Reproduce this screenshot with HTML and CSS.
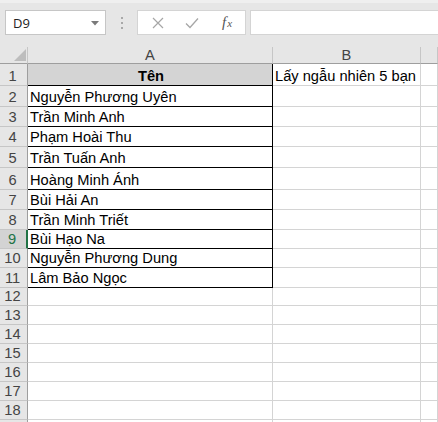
FILE: index.html
```html
<!DOCTYPE html>
<html lang="vi">
<head>
<meta charset="utf-8">
<title>Sheet</title>
<link rel="stylesheet" href="styles.css">
</head>
<body>
<div class="app">
  <div class="toolbar">
    <div class="namebox">
      <span class="nb-text">D9</span>
      <svg class="nb-arrow" width="8" height="5" viewBox="0 0 8 5"><path d="M0 0 H8 L4 4.5 Z" fill="#7a7a7a"/></svg>
    </div>
    <div class="grip"><span></span><span></span><span></span></div>
    <div class="fbuttons">
      <svg class="ic-x" width="12" height="12" viewBox="0 0 12 12"><path d="M1 1 L11 11 M11 1 L1 11" stroke="#a6a6a6" stroke-width="1.2" fill="none"/></svg>
      <svg class="ic-check" width="14" height="12" viewBox="0 0 14 12"><path d="M1 6.5 L5 10.5 L13 1.5" stroke="#a6a6a6" stroke-width="1.3" fill="none"/></svg>
      <span class="fx"><i>f</i><i class="fx-x">x</i></span>
    </div>
    <div class="finput"></div>
  </div>
  <div class="sheet">
    <div class="corner"><svg width="12" height="12" viewBox="0 0 12 12"><path d="M12 0 V12 H0 Z" fill="#bdbdbd"/></svg></div>
    <div class="colh">A</div>
    <div class="colh">B</div>
    <div class="colh"></div>

    <div class="rowh">1</div><div class="cell a head">Tên</div><div class="cell">Lấy ngẫu nhiên 5 bạn</div><div class="cell"></div>
    <div class="rowh">2</div><div class="cell a">Nguyễn Phương Uyên</div><div class="cell"></div><div class="cell"></div>
    <div class="rowh">3</div><div class="cell a">Trần Minh Anh</div><div class="cell"></div><div class="cell"></div>
    <div class="rowh">4</div><div class="cell a">Phạm Hoài Thu</div><div class="cell"></div><div class="cell"></div>
    <div class="rowh">5</div><div class="cell a">Trần Tuấn Anh</div><div class="cell"></div><div class="cell"></div>
    <div class="rowh">6</div><div class="cell a">Hoàng Minh Ánh</div><div class="cell"></div><div class="cell"></div>
    <div class="rowh">7</div><div class="cell a">Bùi Hải An</div><div class="cell"></div><div class="cell"></div>
    <div class="rowh">8</div><div class="cell a">Trần Minh Triết</div><div class="cell"></div><div class="cell"></div>
    <div class="rowh active">9</div><div class="cell a">Bùi Hạo Na</div><div class="cell"></div><div class="cell"></div>
    <div class="rowh">10</div><div class="cell a">Nguyễn Phương Dung</div><div class="cell"></div><div class="cell"></div>
    <div class="rowh">11</div><div class="cell a">Lâm Bảo Ngọc</div><div class="cell"></div><div class="cell"></div>
    <div class="rowh">12</div><div class="cell"></div><div class="cell"></div><div class="cell"></div>
    <div class="rowh">13</div><div class="cell"></div><div class="cell"></div><div class="cell"></div>
    <div class="rowh">14</div><div class="cell"></div><div class="cell"></div><div class="cell"></div>
    <div class="rowh">15</div><div class="cell"></div><div class="cell"></div><div class="cell"></div>
    <div class="rowh">16</div><div class="cell"></div><div class="cell"></div><div class="cell"></div>
    <div class="rowh">17</div><div class="cell"></div><div class="cell"></div><div class="cell"></div>
    <div class="rowh">18</div><div class="cell"></div><div class="cell"></div><div class="cell"></div>
    <div class="rowh"></div><div class="cell"></div><div class="cell"></div><div class="cell"></div>
  </div>
</div>
</body>
</html>
```

FILE: styles.css
```css
html, body {
  margin: 0;
  padding: 0;
  background: #ffffff;
}
.app {
  width: 438px;
  height: 422px;
  overflow: hidden;
  font-family: "Liberation Sans", Arial, sans-serif;
}
.toolbar {
  height: 47px;
  box-sizing: border-box;
  background: #e6e6e6;
  border-top: 3px solid #efefef;
  padding: 7px 0 0 5px;
  display: flex;
  align-items: flex-start;
}
.namebox {
  width: 101px;
  height: 25px;
  box-sizing: border-box;
  background: #ffffff;
  border: 1px solid #c6c6c6;
  display: flex;
  align-items: center;
  justify-content: space-between;
  padding: 0 6px 0 7px;
}
.nb-text {
  font-family: "Open Sans", "Noto Sans", sans-serif;
  font-size: 13px;
  color: #222;
}
.nb-arrow {
  margin-top: 1px;
}
.grip {
  width: 31px;
  height: 25px;
  display: flex;
  flex-direction: column;
  align-items: center;
  justify-content: center;
  gap: 3px;
}
.grip span {
  width: 2px;
  height: 2px;
  background: #a8a8a8;
}
.fbuttons {
  width: 109px;
  height: 25px;
  box-sizing: border-box;
  background: #ffffff;
  border: 1px solid #d4d4d4;
  display: flex;
  align-items: center;
  padding-left: 14px;
}
.ic-x {
  margin-right: 21px;
}
.ic-check {
  margin-right: 23px;
}
.fx {
  font-family: "Liberation Serif", "DejaVu Serif", serif;
  font-size: 15px;
  color: #555;
  display: flex;
  align-items: baseline;
}
.fx-x {
  font-size: 11px;
  margin-left: 1px;
}
.finput {
  flex: 1;
  margin-left: 4px;
  height: 25px;
  box-sizing: border-box;
  background: #ffffff;
  border: 1px solid #d4d4d4;
  border-right: none;
}
.sheet {
  display: grid;
  grid-template-columns: 28px 245px 148px 17px;
  grid-template-rows: 17px 22px 21px 20px 20px 21px 22px 20px 20px 19px 19px 20px 18px 19px 19px 19px 19px 19px 19px 19px;
  font-size: 14.67px;
}
.corner {
  background: #e6e6e6;
  border-right: 1px solid #c6c6c6;
  border-bottom: 1px solid #9e9e9e;
  box-sizing: border-box;
  display: flex;
  align-items: flex-end;
  justify-content: flex-end;
  padding: 0 1px 2px 0;
}
.colh {
  background: #e6e6e6;
  border-right: 1px solid #c6c6c6;
  border-bottom: 1px solid #9e9e9e;
  box-sizing: border-box;
  color: #444;
  display: flex;
  align-items: flex-end;
  justify-content: center;
  line-height: 16px;
}
.rowh {
  background: #e6e6e6;
  border-right: 1px solid #9e9e9e;
  border-bottom: 1px solid #c6c6c6;
  box-sizing: border-box;
  color: #444;
  display: flex;
  align-items: flex-end;
  justify-content: center;
  line-height: 17px;
  padding-right: 2px;
}
.rowh.active {
  background: #d3d3d3;
  color: #217346;
  border-right: 2px solid #217346;
}
.cell {
  border-right: 1px solid #d4d4d4;
  border-bottom: 1px solid #d4d4d4;
  box-sizing: border-box;
  display: flex;
  align-items: flex-end;
  padding-left: 2px;
  line-height: 17px;
  white-space: nowrap;
  color: #000;
}
.cell.a {
  border-right-color: #000;
  border-bottom-color: #000;
}
.cell.head {
  background: #d4d4d4;
  font-weight: bold;
  justify-content: center;
}
```
